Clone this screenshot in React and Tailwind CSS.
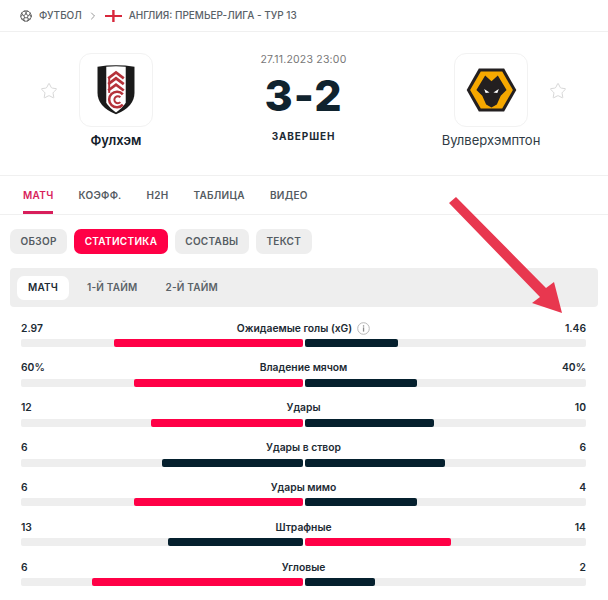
import React from "react";
import { ChevronRight, Star } from "lucide-react";
import { IoFootballOutline } from "react-icons/io5";

const mainTabs = ["МАТЧ", "КОЭФФ.", "H2H", "ТАБЛИЦА", "ВИДЕО"];
const pills = ["ОБЗОР", "СТАТИСТИКА", "СОСТАВЫ", "ТЕКСТ"];
const periods = ["МАТЧ", "1-Й ТАЙМ", "2-Й ТАЙМ"];

// left / right: filled width of each half in px, out of 282
const stats = [
  { label: "Ожидаемые голы (xG)", a: "2.97", b: "1.46", left: 189, right: 93, lead: "left", info: true },
  { label: "Владение мячом", a: "60%", b: "40%", left: 169, right: 112, lead: "left" },
  { label: "Удары", a: "12", b: "10", left: 152, right: 129, lead: "left" },
  { label: "Удары в створ", a: "6", b: "6", left: 141, right: 140, lead: "none" },
  { label: "Удары мимо", a: "6", b: "4", left: 169, right: 112, lead: "left" },
  { label: "Штрафные", a: "13", b: "14", left: 135, right: 146, lead: "right" },
  { label: "Угловые", a: "6", b: "2", left: 211, right: 70, lead: "left" },
];

function FulhamLogo() {
  return (
    <svg width="74" height="74" viewBox="0 0 74 74">
      <path d="M18 13 Q37 10 56 13 L56 40 Q56 54 37 62 Q18 54 18 40 Z" fill="#1a1a1a" />
      <path d="M27 13 Q37 12 47 13 L47 50 Q44 55 37 60 Q30 55 27 50 Z" fill="#fff" />
      <g fill="none" stroke="#b5323a" strokeWidth="2.8">
        <path d="M29 25 L37 19 L45 25" />
        <path d="M29 31 L37 25 L45 31" />
        <path d="M29 37.5 L37 31.5 L45 37.5" />
        <path d="M30 24 V40" strokeWidth="2" />
        <path d="M44 41.5 A8 8 0 1 0 44 52" strokeWidth="2.6" />
        <path d="M41.5 44.5 A3.6 3.6 0 1 0 41.5 49.5" strokeWidth="2" />
      </g>
    </svg>
  );
}

function WolvesLogo() {
  return (
    <svg width="74" height="74" viewBox="0 0 74 74">
      <polygon points="12,37 24.5,15 50.5,15 63,37 50.5,59 24.5,59" fill="#231f20" />
      <polygon points="15.5,37 26.5,18 48.5,18 59.5,37 48.5,56 26.5,56" fill="#f6a800" />
      <polygon
        points="22,37 31,22 37.5,28 44,22 53,37 47,43 43,52 37.5,55 32,52 28,43"
        fill="#231f20"
      />
      <polygon points="30,36 35.5,39.5 31.5,40" fill="#fff" />
      <polygon points="45,36 39.5,39.5 43.5,40" fill="#fff" />
    </svg>
  );
}

function EnglandFlag() {
  return (
    <svg width="17" height="12" viewBox="0 0 17 12">
      <rect width="17" height="12" fill="#fff" />
      <rect y="5" width="17" height="2" fill="#d8283c" />
      <rect x="7.2" width="2.4" height="12" fill="#d8283c" />
    </svg>
  );
}

function InfoIcon() {
  return (
    <svg width="13" height="13" viewBox="0 0 13 13" className="ml-[5px]">
      <circle cx="6.5" cy="6.5" r="5.8" fill="none" stroke="#b8b8b8" strokeWidth="1" />
      <rect x="5.9" y="5.4" width="1.3" height="4.2" fill="#8c8c8c" />
      <rect x="5.9" y="3.3" width="1.3" height="1.3" fill="#8c8c8c" />
    </svg>
  );
}

function Team({ name, strong, children }) {
  return (
    <div className="flex w-[110px] flex-col items-center">
      <div className="flex h-[74px] w-[74px] items-center justify-center rounded-[12px] border border-[#f2f2f2] bg-white">
        {children}
      </div>
      <div className={`mt-[3px] text-[13px] leading-[20px] whitespace-nowrap ${strong ? "font-semibold text-[#13202a]" : "font-normal text-[#2f3b44]"}`}>
        {name}
      </div>
    </div>
  );
}

function StatRow({ stat }) {
  const leftColor = stat.lead === "left" ? "bg-[#ff0046]" : "bg-[#05202e]";
  const rightColor = stat.lead === "right" ? "bg-[#ff0046]" : "bg-[#05202e]";
  return (
    <div className="h-[39.85px]">
      <div className="flex h-[19px] items-end justify-between pb-[2px] text-[10.3px] font-semibold text-[#1c2a33]">
        <span className="w-[60px]">{stat.a}</span>
        <span className="flex items-center">
          {stat.label}
          {stat.info && <InfoIcon />}
        </span>
        <span className="w-[60px] text-right">{stat.b}</span>
      </div>
      <div className="mt-[1px] flex h-[8px] gap-[2px]">
        <div className="flex flex-1 justify-end rounded-l-[2px] bg-[#eeeeee]">
          <div className={`h-full rounded-[2px] ${leftColor}`} style={{ width: stat.left }} />
        </div>
        <div className="flex-1 rounded-r-[2px] bg-[#eeeeee]">
          <div className={`h-full rounded-[2px] ${rightColor}`} style={{ width: stat.right }} />
        </div>
      </div>
    </div>
  );
}

export default function App() {
  return (
    <div className="relative h-[600px] w-[608px] overflow-hidden bg-white font-['Inter',sans-serif]">
      {/* breadcrumb */}
      <div className="flex h-[32px] items-center border-b border-[#f0f0f0] pl-[19px] text-[10px] font-medium text-[#5a6268]">
        <IoFootballOutline size={14} className="text-[#555]" />
        <span className="ml-[6px]">ФУТБОЛ</span>
        <ChevronRight size={12} strokeWidth={1.5} className="ml-[5px] text-[#777]" />
        <span className="ml-[6px]"><EnglandFlag /></span>
        <span className="ml-[7px]">АНГЛИЯ: ПРЕМЬЕР-ЛИГА - ТУР 13</span>
      </div>

      {/* match header */}
      <div className="flex h-[144px] border-b border-[#f0f0f0] pt-[21px] pr-[41px] pl-[40px]">
        <Star size={18} strokeWidth={1} className="mt-[29px] text-[#c9c9c9]" />
        <div className="ml-[3px]">
          <Team name="Фулхэм" strong><FulhamLogo /></Team>
        </div>
        <div className="flex flex-1 flex-col items-center">
          <div className="text-[10.5px] leading-[14px] tracking-[0.2px] text-[#777]">27.11.2023 23:00</div>
          <div className="mt-[5px] text-[43px] font-extrabold leading-[46px] tracking-[1px] text-[#10232e]">3-2</div>
          <div className="mt-[11px] text-[10px] font-bold leading-[14px] tracking-[0.9px] text-[#1c2a33]">ЗАВЕРШЕН</div>
        </div>
        <div className="mr-[3px]">
          <Team name="Вулверхэмптон"><WolvesLogo /></Team>
        </div>
        <Star size={18} strokeWidth={1} className="mt-[29px] text-[#c9c9c9]" />
      </div>

      {/* main tabs */}
      <div className="flex h-[39px] gap-[25px] border-b border-[#f0f0f0] pl-[23px] text-[10px] font-semibold tracking-[0.3px] text-[#555c62]">
        {mainTabs.map((tab, i) => (
          <div
            key={tab}
            className={`flex h-[38px] items-center ${i === 0 ? "border-b-[3px] border-[#d81e5b] pt-[3px] text-[#d81e5b]" : ""}`}
          >
            {tab}
          </div>
        ))}
      </div>

      {/* sub tabs */}
      <div className="mt-[14px] flex gap-[7px] pl-[10px]">
        {pills.map((pill) => (
          <div
            key={pill}
            className={`flex h-[25px] items-center rounded-[7px] px-[10.5px] text-[10px] font-semibold tracking-[0.3px] ${pill === "СТАТИСТИКА" ? "bg-[#ff0046] text-white" : "bg-[#eeeeee] text-[#555c62]"}`}
          >
            {pill}
          </div>
        ))}
      </div>

      {/* period switch */}
      <div className="mx-[10px] mt-[14px] flex h-[39px] items-center gap-[8px] rounded-[4px] bg-[#eeeeee] px-[7px]">
        {periods.map((period, i) => (
          <div
            key={period}
            className={`flex h-[24px] items-center rounded-[7px] text-[10px] font-semibold tracking-[0.2px] ${i === 0 ? "bg-white px-[11px] text-[#1c2a33]" : "px-[10px] text-[#5a6268]"}`}
          >
            {period}
          </div>
        ))}
      </div>

      {/* stats */}
      <div className="mt-[12px] pr-[22px] pl-[21px]">
        {stats.map((stat) => (
          <StatRow key={stat.label} stat={stat} />
        ))}
      </div>

      {/* arrow drawn over the page */}
      <svg width="608" height="600" className="pointer-events-none absolute top-0 left-0">
        <polygon
          points="449,203 456,197 546,288 554,282 562,313 532,303 540,297"
          fill="#e8374f"
        />
      </svg>
    </div>
  );
}
